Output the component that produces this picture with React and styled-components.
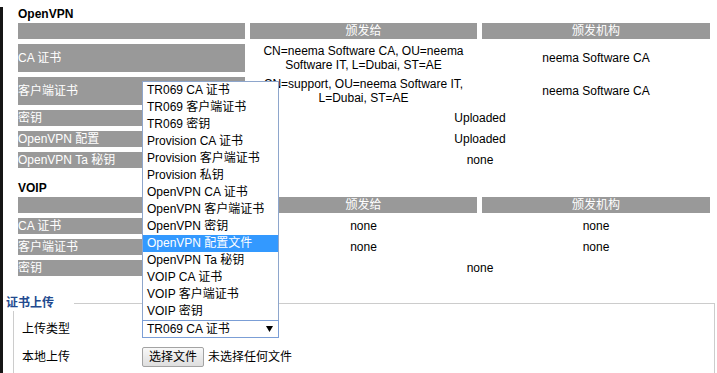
import React from 'react';
import styled, { createGlobalStyle } from 'styled-components';

const GlobalStyle = createGlobalStyle`
  html, body {
    margin: 0;
    padding: 0;
    background: #fff;
  }
  body {
    font-family: "Liberation Sans", "Noto Sans CJK SC", sans-serif;
    font-size: 12px;
    line-height: 14px;
    color: #000;
    overflow: hidden;
  }
`;

const Page = styled.div`
  border-left: 3px solid #161616;
  padding: 0 0 0 10px;
  min-height: 100vh;
  box-sizing: border-box;
`;

const SectionTitle = styled.h3`
  margin: ${p => (p.$first ? '7px' : '8px')} 0 -3px 5px;
  font-size: 12px;
  line-height: 14px;
  height: 14px;
  font-weight: bold;
`;

const CertTable = styled.table`
  border-collapse: separate;
  border-spacing: 5px;
  width: 702px;
  table-layout: fixed;
`;

const HeadCell = styled.th`
  background: #999;
  color: #fff;
  font-weight: normal;
  text-align: center;
  padding: 0;
  width: ${p => p.$w}px;
`;

const LabelCell = styled.td`
  background: #999;
  color: #fff;
  padding: 0;
  vertical-align: middle;
`;

const ValueCell = styled.td`
  text-align: center;
  padding: 0;
  vertical-align: middle;
`;

const Line = styled.div`
  height: 16px;
  line-height: 16px;
  white-space: nowrap;
`;

const Wrap = styled.div`
  line-height: 14px;
`;

const UploadSet = styled.fieldset`
  margin: 14px 0 0 0;
  width: 702px;
  box-sizing: border-box;
  border: 1px solid #ccc;
  border-bottom: none;
  padding: 9px 8px 20px 8px;
`;

const Legend = styled.legend`
  color: #224a8f;
  font-weight: bold;
  font-size: 12px;
  line-height: 16px;
  height: 16px;
  margin-left: -19px;
  padding: 0 20px 0 3px;
`;

const FormGrid = styled.div`
  display: grid;
  grid-template-columns: 120px auto;
  row-gap: 9px;
  align-items: center;
`;

const FieldLabel = styled.div`
  font-size: 12px;
  line-height: 14px;
  height: 14px;
`;

const SelectWrap = styled.div`
  position: relative;
  width: 137px;
`;

const SelectBox = styled.div`
  box-sizing: border-box;
  height: 18px;
  border: 1px solid #7b9ed6;
  background: #fff;
  padding: 0 5px 0 4px;
  display: flex;
  align-items: center;
  justify-content: space-between;
`;

const SelectText = styled.span`
  line-height: 16px;
  height: 16px;
  white-space: nowrap;
`;

const OptionList = styled.ul`
  position: absolute;
  left: 0;
  bottom: 100%;
  width: 137px;
  box-sizing: border-box;
  margin: 0;
  padding: 0;
  list-style: none;
  background: #fff;
  border: 1px solid #8ea6cc;
  border-bottom: none;
  z-index: 5;
`;

const OptionItem = styled.li`
  height: 17px;
  line-height: 17px;
  padding-left: 4px;
  white-space: nowrap;
  overflow: hidden;
  background: ${p => (p.$active ? '#3399ff' : '#fff')};
  color: ${p => (p.$active ? '#fff' : '#000')};
`;

const FileRow = styled.div`
  display: flex;
  align-items: center;
  gap: 4px;
`;

const FileButton = styled.button`
  font: inherit;
  font-size: 12px;
  height: 20px;
  padding: 0 6px;
  border: 1px solid #a3a3a3;
  border-radius: 2px;
  background: linear-gradient(#f8f8f8, #dedede);
  color: #000;
  line-height: 18px;
`;

const FileName = styled.span`
  line-height: 14px;
  height: 14px;
`;

const Arrow = () => (
  <svg width="7" height="6" viewBox="0 0 7 6">
    <path d="M0 0 H7 L3.5 6 Z" fill="#000" />
  </svg>
);

const options = [
  'TR069 CA 证书',
  'TR069 客户端证书',
  'TR069 密钥',
  'Provision CA 证书',
  'Provision 客户端证书',
  'Provision 私钥',
  'OpenVPN CA 证书',
  'OpenVPN 客户端证书',
  'OpenVPN 密钥',
  'OpenVPN 配置文件',
  'OpenVPN Ta 秘钥',
  'VOIP CA 证书',
  'VOIP 客户端证书',
  'VOIP 密钥',
];

function Head() {
  return (
    <thead>
      <tr>
        <HeadCell $w={227}><Line /></HeadCell>
        <HeadCell $w={227}><Line>颁发给</Line></HeadCell>
        <HeadCell $w={228}><Line>颁发机构</Line></HeadCell>
      </tr>
    </thead>
  );
}

function Row({ label, issued, issuer, span }) {
  return (
    <tr>
      <LabelCell><Line>{label}</Line></LabelCell>
      {span ? (
        <ValueCell colSpan={2}><Line>{span}</Line></ValueCell>
      ) : (
        <>
          <ValueCell><Wrap>{issued}</Wrap></ValueCell>
          <ValueCell><Wrap>{issuer}</Wrap></ValueCell>
        </>
      )}
    </tr>
  );
}

export default function App() {
  return (
    <>
      <GlobalStyle />
      <Page>
        <SectionTitle $first>OpenVPN</SectionTitle>
        <CertTable>
          <Head />
          <tbody>
            <Row label="CA 证书" issued="CN=neema Software CA, OU=neema Software IT, L=Dubai, ST=AE" issuer="neema Software CA" />
            <Row label="客户端证书" issued="CN=support, OU=neema Software IT, L=Dubai, ST=AE" issuer="neema Software CA" />
            <Row label="密钥" span="Uploaded" />
            <Row label="OpenVPN 配置" span="Uploaded" />
            <Row label="OpenVPN Ta 秘钥" span="none" />
          </tbody>
        </CertTable>

        <SectionTitle>VOIP</SectionTitle>
        <CertTable>
          <Head />
          <tbody>
            <Row label="CA 证书" issued="none" issuer="none" />
            <Row label="客户端证书" issued="none" issuer="none" />
            <Row label="密钥" span="none" />
          </tbody>
        </CertTable>

        <UploadSet>
          <Legend>证书上传</Legend>
          <FormGrid>
            <FieldLabel>上传类型</FieldLabel>
            <SelectWrap>
              <OptionList>
                {options.map((o, i) => (
                  <OptionItem key={o} $active={i === 9}>{o}</OptionItem>
                ))}
              </OptionList>
              <SelectBox>
                <SelectText>TR069 CA 证书</SelectText>
                <Arrow />
              </SelectBox>
            </SelectWrap>
            <FieldLabel>本地上传</FieldLabel>
            <FileRow>
              <FileButton>选择文件</FileButton>
              <FileName>未选择任何文件</FileName>
            </FileRow>
          </FormGrid>
        </UploadSet>
      </Page>
    </>
  );
}
